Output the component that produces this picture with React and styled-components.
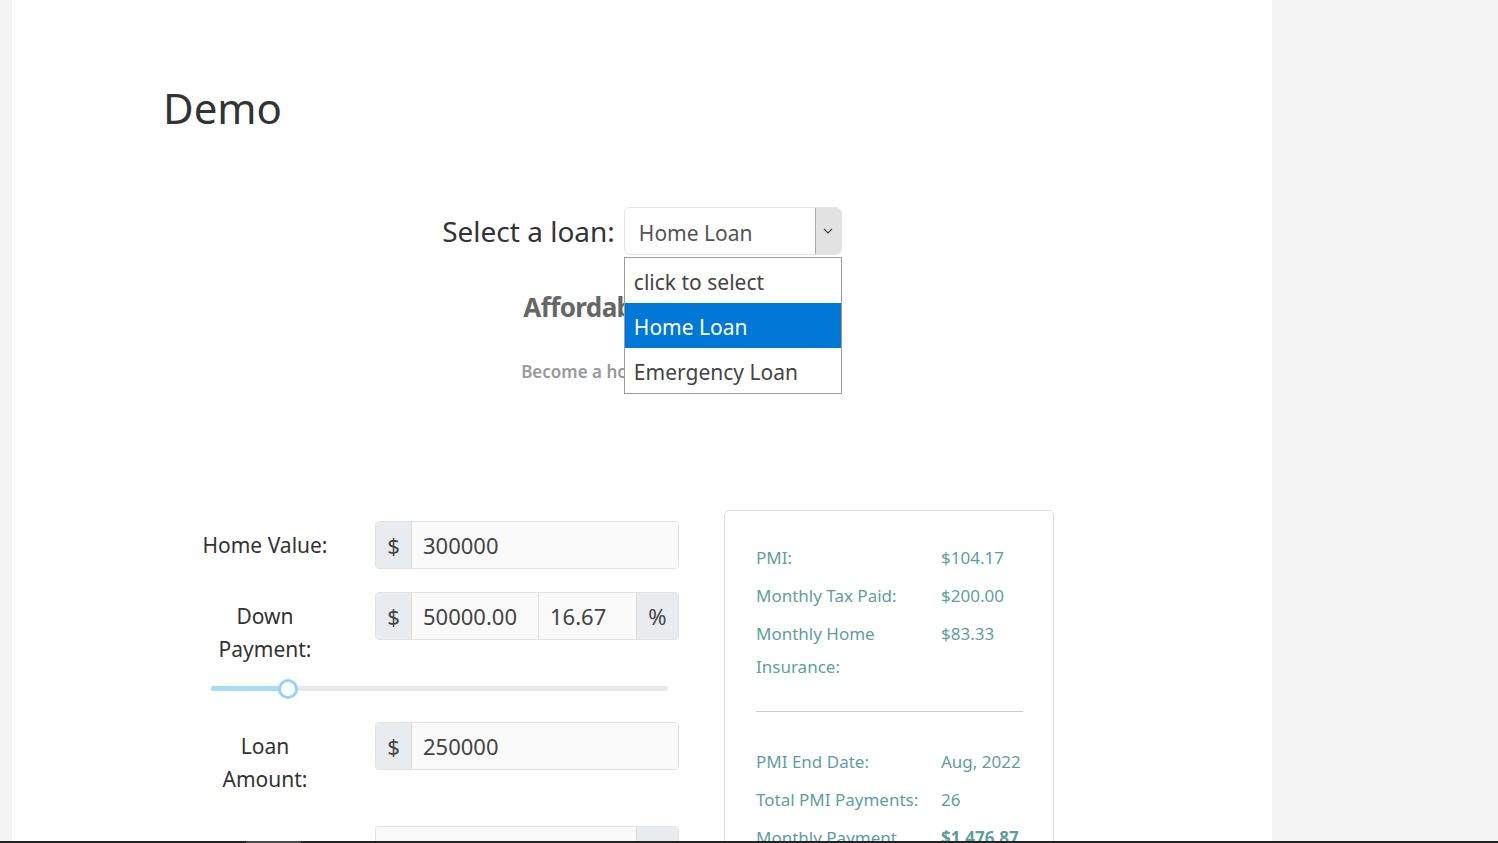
import React from 'react';
import styled, { createGlobalStyle } from 'styled-components';

const GlobalStyle = createGlobalStyle`
  html, body {
    margin: 0;
    padding: 0;
    background: #f4f4f4;
    overflow: hidden;
  }
  body {
    font-family: "Noto Sans", "Open Sans", sans-serif;
    color: #333;
  }
`;

const App = () => {
  return (
    <>
      <GlobalStyle />
      <Sheet>
        <Title>Demo</Title>

        <LoanRow>
          <LoanLabel>Select a loan:</LoanLabel>
          <SelectWrap>
            <SelectBox>
              <SelectValue>Home Loan</SelectValue>
              <SelectArrow>
                <svg width="10" height="6" viewBox="0 0 10 6">
                  <path d="M1 1l4 4 4-4" fill="none" stroke="#444" strokeWidth="1.2" />
                </svg>
              </SelectArrow>
            </SelectBox>
            <OptionList>
              <Option>click to select</Option>
              <Option $active>Home Loan</Option>
              <Option>Emergency Loan</Option>
            </OptionList>
          </SelectWrap>
        </LoanRow>

        <Hero>
          <HeroTitle>Affordability Check</HeroTitle>
          <HeroText>Become a homeowner today!</HeroText>
        </Hero>

        <Calculator>
          <Form>
            <FieldRow>
              <FieldLabel>Home Value:</FieldLabel>
              <InputGroup>
                <Addon>$</Addon>
                <Field>300000</Field>
              </InputGroup>
            </FieldRow>

            <FieldRow>
              <FieldLabel>Down Payment:</FieldLabel>
              <InputGroup>
                <Addon>$</Addon>
                <Field $width="126px">50000.00</Field>
                <Field $divided>16.67</Field>
                <Addon $right $width="41px">%</Addon>
              </InputGroup>
            </FieldRow>

            <Slider>
              <SliderFill style={{ width: `${(77 / 457) * 100}%` }} />
              <SliderThumb style={{ left: `${(77 / 457) * 100}%` }} />
            </Slider>

            <FieldRow>
              <FieldLabel>Loan Amount:</FieldLabel>
              <InputGroup>
                <Addon>$</Addon>
                <Field>250000</Field>
              </InputGroup>
            </FieldRow>

            <FieldRow>
              <FieldLabel />
              <InputGroup>
                <Field />
                <Addon $right $width="41px" />
              </InputGroup>
            </FieldRow>
          </Form>

          <SummaryCard>
            <StatRow>
              <StatLabel>PMI:</StatLabel>
              <StatValue>$104.17</StatValue>
            </StatRow>
            <StatRow>
              <StatLabel>Monthly Tax Paid:</StatLabel>
              <StatValue>$200.00</StatValue>
            </StatRow>
            <StatRow>
              <StatLabel>Monthly Home Insurance:</StatLabel>
              <StatValue>$83.33</StatValue>
            </StatRow>
            <Divider />
            <StatRow>
              <StatLabel>PMI End Date:</StatLabel>
              <StatValue>Aug, 2022</StatValue>
            </StatRow>
            <StatRow>
              <StatLabel>Total PMI Payments:</StatLabel>
              <StatValue>26</StatValue>
            </StatRow>
            <StatRow>
              <StatLabel>Monthly Payment</StatLabel>
              <StatValue $bold>$1,476.87</StatValue>
            </StatRow>
          </SummaryCard>
        </Calculator>
      </Sheet>
      <ScrollEdge>
        <ScrollThumb />
      </ScrollEdge>
    </>
  );
};

const Sheet = styled.main`
  margin-left: 12px;
  width: 1260px;
  height: 100vh;
  background: #fff;
  overflow: hidden;
`;

const Title = styled.h1`
  margin: 0;
  padding: 80px 0 0 151px;
  font-size: 42px;
  font-weight: 400;
  line-height: 56px;
  color: #333;
`;

const LoanRow = styled.div`
  display: flex;
  justify-content: center;
  align-items: center;
  gap: 9px;
  margin-top: 71px;
  position: relative;
  z-index: 2;
`;

const LoanLabel = styled.span`
  font-size: 28px;
  color: #333;
`;

const SelectWrap = styled.div`
  position: relative;
  width: 218px;
`;

const SelectBox = styled.div`
  display: flex;
  height: 48px;
  box-sizing: border-box;
  border: 1px solid #e4e4e4;
  border-radius: 6px;
  overflow: hidden;
`;

const SelectValue = styled.span`
  flex: 1;
  display: flex;
  align-items: center;
  padding: 3px 0 0 14px;
  font-size: 21px;
  color: #555;
`;

const SelectArrow = styled.span`
  width: 25px;
  display: flex;
  align-items: center;
  justify-content: center;
  background: #e2e2e2;
  border-left: 1px solid #a8a8a8;
`;

const OptionList = styled.ul`
  position: absolute;
  top: 50px;
  left: 0;
  right: 0;
  margin: 0;
  padding: 0;
  list-style: none;
  background: #fff;
  border: 1px solid #9c9c9c;
`;

const Option = styled.li`
  height: 45px;
  display: flex;
  align-items: center;
  padding: 2px 0 0 9px;
  box-sizing: border-box;
  font-size: 21px;
  color: ${(p) => (p.$active ? '#fff' : '#444')};
  background: ${(p) => (p.$active ? '#0078d7' : '#fff')};
`;

const Hero = styled.section`
  text-align: center;
  margin-top: 34px;
`;

const HeroTitle = styled.h2`
  margin: 0;
  font-size: 26px;
  font-weight: 700;
  line-height: 36px;
  letter-spacing: -0.6px;
  color: #666;
`;

const HeroText = styled.p`
  margin: 35px 0 0;
  font-size: 17px;
  font-weight: 600;
  color: #999;
`;

const Calculator = styled.section`
  display: flex;
  align-items: flex-start;
  margin-top: 127px;
  padding-left: 188px;
`;

const Form = styled.div`
  width: 479px;
  padding-top: 11px;
  display: flex;
  flex-direction: column;
  gap: 22px;
`;

const FieldRow = styled.div`
  display: grid;
  grid-template-columns: 130px 304px;
  column-gap: 45px;
  align-items: start;
`;

const FieldLabel = styled.label`
  text-align: center;
  font-size: 21px;
  line-height: 33px;
  padding: 8px 0;
  color: #333;
`;

const InputGroup = styled.div`
  display: flex;
  height: 48px;
  box-sizing: border-box;
  border: 1px solid #e3e3e3;
  border-radius: 4px;
  overflow: hidden;
`;

const Addon = styled.span`
  width: ${(p) => p.$width || '35px'};
  flex-shrink: 0;
  display: flex;
  align-items: center;
  justify-content: center;
  background: #e9ecef;
  font-size: 22px;
  color: #444;
  ${(p) => (p.$right ? 'border-left: 1px solid #dcdcdc;' : 'border-right: 1px solid #dcdcdc;')}
`;

const Field = styled.span`
  ${(p) => (p.$width ? `width: ${p.$width}; flex-shrink: 0;` : 'flex: 1;')}
  box-sizing: border-box;
  display: flex;
  align-items: center;
  padding-left: 11px;
  background: #fafafa;
  font-size: 22px;
  color: #444;
  ${(p) => p.$divided && 'border-left: 1px solid #e3e3e3;'}
`;

const Slider = styled.div`
  position: relative;
  width: 457px;
  height: 5px;
  margin: -10px 0 9px 11px;
  border-radius: 3px;
  background: #e8e8e8;
`;

const SliderFill = styled.div`
  height: 100%;
  border-radius: 3px;
  background: #a5ddf6;
`;

const SliderThumb = styled.div`
  position: absolute;
  top: 50%;
  width: 14px;
  height: 14px;
  transform: translate(-50%, -50%);
  border-radius: 50%;
  border: 3px solid #93d5f4;
  background: #fff;
`;

const SummaryCard = styled.aside`
  margin-left: 45px;
  width: 330px;
  box-sizing: border-box;
  height: 400px;
  padding: 30px 30px 0 31px;
  border: 1px solid #ddd;
  border-radius: 5px;
`;

const StatRow = styled.div`
  display: grid;
  grid-template-columns: 185px auto;
  margin-bottom: 5px;
  font-size: 17px;
  line-height: 33px;
  color: #5f9ea0;
`;

const StatLabel = styled.span``;

const StatValue = styled.span`
  font-weight: ${(p) => (p.$bold ? 700 : 400)};
`;

const Divider = styled.hr`
  margin: 28px 0 33px;
  border: none;
  border-top: 1px solid #ccc;
`;

const ScrollEdge = styled.div`
  position: fixed;
  left: 0;
  right: 0;
  bottom: 0;
  height: 2px;
  background: #222;
`;

const ScrollThumb = styled.div`
  margin-left: 246px;
  width: 55px;
  height: 100%;
  background: #4a4a4a;
`;

export default App;
